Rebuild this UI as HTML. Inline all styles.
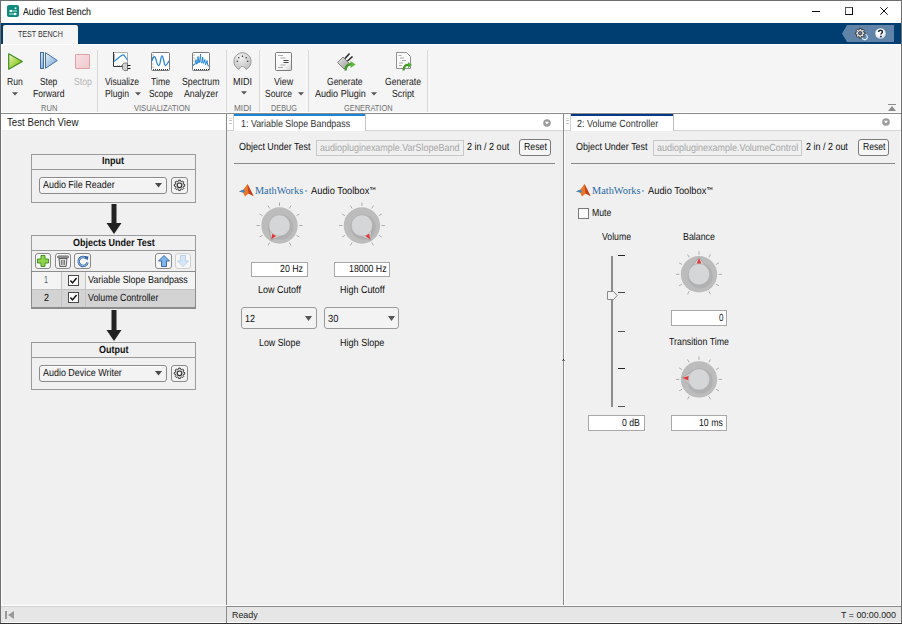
<!DOCTYPE html><html><head><meta charset="utf-8"><style>
html,body{margin:0;padding:0;}body{width:902px;height:624px;overflow:hidden;position:relative;background:#f0f0f0;font-family:"Liberation Sans",sans-serif;}
div{position:absolute;box-sizing:border-box;} .t{white-space:pre;} svg{position:absolute;overflow:visible;}
</style></head><body>
<div style="left:0px;top:0px;width:902px;height:23px;background:#fff;"></div>
<svg style="left:7px;top:5px" width="12" height="12" viewBox="0 0 12 12"><rect x="0" y="0" width="12" height="12" rx="2" fill="#0f8a80"/><path d="M2 6h8M2 9h8" stroke="#bfe8e2" stroke-width="1"/><circle cx="4" cy="6" r="1.2" fill="#fff"/><circle cx="8" cy="9" r="1.2" fill="#fff"/><circle cx="8.5" cy="3.2" r="1" fill="#e0f4f1"/></svg>
<div class="t" style="left:22.50px;top:8px;font-size:10.3px;line-height:10.3px;transform:scaleX(0.8500);transform-origin:0 0;color:#000;text-rendering:geometricPrecision;">Audio Test Bench</div>
<div style="left:812px;top:11px;width:8px;height:1px;background:#111;"></div>
<div style="left:845px;top:7px;width:8px;height:8px;border:1px solid #111;border-top-color:#555;border-left-color:#555;"></div>
<svg style="left:880px;top:7px" width="8" height="8" viewBox="0 0 8 8"><path d="M0.3 0.3L7.7 7.7M7.7 0.3L0.3 7.7" stroke="#111" stroke-width="1"/></svg>
<div style="left:0px;top:23px;width:902px;height:21px;background:#003e72;"></div>
<div style="left:3px;top:25px;width:75px;height:19px;background:#f5f5f5;border-radius:2px 2px 0 0;"></div>
<div class="t" style="left:18.30px;top:30px;font-size:8.5px;line-height:8.5px;transform:scaleX(0.8336);transform-origin:0 0;color:#333;">TEST BENCH</div>
<svg style="left:842px;top:25px" width="52" height="17" viewBox="0 0 52 17"><path d="M5 0H52V17H5L0 8.5Z" fill="#5f84a8"/></svg>
<svg style="left:855px;top:28px" width="13" height="12" viewBox="0 0 13 12"><path d="M4.21 1.63L4.36 0.37L6.04 0.37L6.19 1.63L7.02 1.98L8.02 1.19L9.21 2.38L8.42 3.38L8.77 4.21L10.03 4.36L10.03 6.04L8.77 6.19L8.42 7.02L9.21 8.02L8.02 9.21L7.02 8.42L6.19 8.77L6.04 10.03L4.36 10.03L4.21 8.77L3.38 8.42L2.38 9.21L1.19 8.02L1.98 7.02L1.63 6.19L0.37 6.04L0.37 4.36L1.63 4.21L1.98 3.38L1.19 2.38L2.38 1.19L3.38 1.98Z" fill="#e4e4e4" stroke="#3a3a3a" stroke-width="1"/><circle cx="5.2" cy="5.2" r="1.7" fill="#5f84a8" stroke="#333" stroke-width="0.9"/><path d="M7.2 9.6A2.6 2.6 0 1 0 10.6 6.6" stroke="#dff0ff" stroke-width="1.1" fill="none"/></svg>
<svg style="left:875px;top:28px" width="11" height="11" viewBox="0 0 11 11"><defs><radialGradient id="gH" cx="0.45" cy="0.35" r="0.7"><stop offset="0.5" stop-color="#ffffff"/><stop offset="1" stop-color="#b9c6d2"/></radialGradient></defs><circle cx="5.5" cy="5.5" r="5.3" fill="url(#gH)"/><path d="M3.6 4.1C3.6 2.9 4.4 2.3 5.5 2.3S7.4 2.9 7.4 4C7.4 5.2 5.9 5.3 5.9 6.6" stroke="#1d2a3a" stroke-width="1.5" fill="none"/><circle cx="5.9" cy="8.5" r="0.9" fill="#1d2a3a"/></svg>
<div style="left:0px;top:44px;width:902px;height:69px;background:#f5f5f5;"></div>
<div style="left:1px;top:112px;width:900px;height:1px;background:#fff;"></div>
<div style="left:1px;top:44px;width:900px;height:1px;background:#fff;"></div>
<div style="left:1px;top:44px;width:1px;height:69px;background:#fff;"></div>
<div style="left:900px;top:44px;width:1px;height:69px;background:#fff;"></div>
<div style="left:0px;top:113px;width:902px;height:1px;background:#8c8c8c;"></div>
<div style="left:97px;top:50px;width:1px;height:62px;background:#d9d9d9;"></div>
<div style="left:226px;top:50px;width:1px;height:62px;background:#d9d9d9;"></div>
<div style="left:259px;top:50px;width:1px;height:62px;background:#d9d9d9;"></div>
<div style="left:308px;top:50px;width:1px;height:62px;background:#d9d9d9;"></div>
<div style="left:427px;top:50px;width:1px;height:62px;background:#d9d9d9;"></div>
<svg style="left:8px;top:53px" width="15" height="17" viewBox="0 0 15 17"><defs><linearGradient id="gG" x1="0" y1="0" x2="1" y2="1"><stop offset="0" stop-color="#f0f9c8"/><stop offset="0.6" stop-color="#9fd13a"/><stop offset="1" stop-color="#6ab020"/></linearGradient></defs><path d="M0.7 0.8L14.3 8.5L0.7 16.2Z" fill="url(#gG)" stroke="#3e8a22" stroke-width="1.2" stroke-linejoin="round"/></svg>
<svg style="left:40px;top:52px" width="18" height="17" viewBox="0 0 18 17"><defs><linearGradient id="gB" x1="0" y1="0" x2="1" y2="1"><stop offset="0" stop-color="#e8f4fd"/><stop offset="1" stop-color="#6a9fd4"/></linearGradient></defs><rect x="0.5" y="0.5" width="3" height="16" fill="url(#gB)" stroke="#466f9a" stroke-width="1"/><path d="M5.5 0.7L17.3 8.5L5.5 16.3Z" fill="url(#gB)" stroke="#466f9a" stroke-width="1" stroke-linejoin="round"/></svg>
<div style="left:75px;top:54px;width:15px;height:15px;background:linear-gradient(135deg,#f8e0e2,#efc8cc);border:1px solid #dba3a8;border-radius:1px;"></div>
<div class="t" style="left:6.70px;top:78px;font-size:10.3px;line-height:10.3px;transform:scaleX(0.8318);transform-origin:0 0;color:#1a1a1a;text-rendering:geometricPrecision;">Run</div>
<svg style="left:12px;top:91.6px" width="6" height="4" viewBox="0 0 6 4"><path d="M0 0.3H6L3 3.6Z" fill="#555"/></svg>
<div class="t" style="left:39.70px;top:78px;font-size:10.3px;line-height:10.3px;transform:scaleX(0.8141);transform-origin:0 0;color:#1a1a1a;text-rendering:geometricPrecision;">Step</div>
<div class="t" style="left:32.70px;top:90px;font-size:10.3px;line-height:10.3px;transform:scaleX(0.8318);transform-origin:0 0;color:#1a1a1a;text-rendering:geometricPrecision;">Forward</div>
<div class="t" style="left:73.70px;top:78px;font-size:10.3px;line-height:10.3px;transform:scaleX(0.8471);transform-origin:0 0;color:#b4b4b4;text-rendering:geometricPrecision;">Stop</div>
<div class="t" style="left:41.00px;top:104px;font-size:8.5px;line-height:8.5px;transform:scaleX(0.8871);transform-origin:0 0;color:#6e6e6e;">RUN</div>
<svg style="left:113px;top:52px" width="19" height="19" viewBox="0 0 19 19"><rect x="0" y="0" width="15" height="15" fill="#fff"/><path d="M0.5 0.5H14.5V15" stroke="#b0b0b0" stroke-width="1" fill="none"/><path d="M0.5 0V14.5H15" stroke="#333" stroke-width="1" fill="none"/><path d="M1 3h1M1 5h1M1 7h1M4 14h1M6 14h1M8 14h1" stroke="#444" stroke-width="0.8"/><path d="M1 9.5L6.5 5L9 3.2H11L14.5 8" stroke="#2b8ad6" stroke-width="1.2" fill="none"/><path d="M9.5 12.5L11 11H14.5V18.5H11L9.5 17Z" fill="#d0d0d0" stroke="#666" stroke-width="0.8"/><path d="M14.5 13.5h3M14.5 16.5h3" stroke="#111" stroke-width="1.2"/></svg>
<svg style="left:151px;top:52px" width="19" height="19" viewBox="0 0 19 19"><rect x="0.5" y="0.5" width="18" height="18" rx="1" fill="#fff" stroke="#7a7a7a" stroke-width="1"/><path d="M1 9C2 4.5 3.5 3.5 4.5 6S6 13.5 7.8 13.5S9.5 4 11 4S13 13.5 14.5 13.5S17 10 18 9" stroke="#2b8ad6" stroke-width="1.3" fill="none"/><path d="M2 17.5h16" stroke="#333" stroke-width="1" stroke-dasharray="1 1"/><path d="M1.5 3h1M1.5 6h1M1.5 12h1M1.5 15h1" stroke="#555" stroke-width="0.8"/></svg>
<svg style="left:192px;top:52px" width="18" height="19" viewBox="0 0 18 19"><rect x="0.5" y="0.5" width="17" height="18" rx="1" fill="#fff" stroke="#7a7a7a" stroke-width="1"/><path d="M1 14L2 12L3 12.5L4 7.5L4.5 12L5.5 11.5L6 4.5L6.8 11L7.5 10L8.5 2L9 10.5L10 11L10.7 5L11.3 11.5L12 10.5L12.8 7.5L13.5 13L14.3 11L15 8.5L15.8 13.5L17 14" stroke="#2b8ad6" stroke-width="1" fill="none" stroke-linejoin="round"/><path d="M2 17.5h15" stroke="#333" stroke-width="1" stroke-dasharray="1 1"/><path d="M1.5 3h1M1.5 6h1M1.5 9h1" stroke="#555" stroke-width="0.8"/></svg>
<div class="t" style="left:104.70px;top:78px;font-size:10.3px;line-height:10.3px;transform:scaleX(0.8293);transform-origin:0 0;color:#1a1a1a;text-rendering:geometricPrecision;">Visualize</div>
<div class="t" style="left:105.00px;top:90px;font-size:10.3px;line-height:10.3px;transform:scaleX(0.8384);transform-origin:0 0;color:#1a1a1a;text-rendering:geometricPrecision;">Plugin</div>
<svg style="left:134.5px;top:91.6px" width="6" height="4" viewBox="0 0 6 4"><path d="M0 0.3H6L3 3.6Z" fill="#555"/></svg>
<div class="t" style="left:151.00px;top:78px;font-size:10.3px;line-height:10.3px;transform:scaleX(0.8444);transform-origin:0 0;color:#1a1a1a;text-rendering:geometricPrecision;">Time</div>
<div class="t" style="left:148.60px;top:90px;font-size:10.3px;line-height:10.3px;transform:scaleX(0.8171);transform-origin:0 0;color:#1a1a1a;text-rendering:geometricPrecision;">Scope</div>
<div class="t" style="left:181.80px;top:78px;font-size:10.3px;line-height:10.3px;transform:scaleX(0.8499);transform-origin:0 0;color:#1a1a1a;text-rendering:geometricPrecision;">Spectrum</div>
<div class="t" style="left:183.60px;top:90px;font-size:10.3px;line-height:10.3px;transform:scaleX(0.8523);transform-origin:0 0;color:#1a1a1a;text-rendering:geometricPrecision;">Analyzer</div>
<div class="t" style="left:134.00px;top:104px;font-size:8.5px;line-height:8.5px;transform:scaleX(0.8871);transform-origin:0 0;color:#6e6e6e;">VISUALIZATION</div>
<svg style="left:233px;top:52px" width="19" height="18" viewBox="0 0 19 18"><defs><radialGradient id="gM" cx="0.4" cy="0.3" r="0.8"><stop offset="0" stop-color="#f2f2f2"/><stop offset="1" stop-color="#bdbdbd"/></radialGradient></defs><path d="M9.5 0.6A8.8 8.8 0 0 1 13 17.4C12 15.5 11 14.5 9.5 14.5S7 15.5 6 17.4A8.8 8.8 0 0 1 9.5 0.6Z" fill="url(#gM)" stroke="#8a8a8a" stroke-width="0.8"/><circle cx="9.5" cy="4.2" r="0.75" fill="#333"/><circle cx="5.8" cy="5.8" r="0.75" fill="#333"/><circle cx="13.2" cy="5.8" r="0.75" fill="#333"/><circle cx="4.3" cy="9.2" r="0.75" fill="#333"/><circle cx="14.7" cy="9.2" r="0.75" fill="#333"/></svg>
<div class="t" style="left:232.90px;top:78px;font-size:10.3px;line-height:10.3px;transform:scaleX(0.8782);transform-origin:0 0;color:#1a1a1a;text-rendering:geometricPrecision;">MIDI</div>
<svg style="left:240.5px;top:91.3px" width="6" height="4" viewBox="0 0 6 4"><path d="M0 0.3H6L3 3.6Z" fill="#555"/></svg>
<div class="t" style="left:233.80px;top:104px;font-size:8.5px;line-height:8.5px;transform:scaleX(0.9667);transform-origin:0 0;color:#6e6e6e;">MIDI</div>
<svg style="left:275px;top:52px" width="17" height="19" viewBox="0 0 17 19"><defs><linearGradient id="gD" x1="0" y1="0" x2="1" y2="1"><stop offset="0" stop-color="#fff"/><stop offset="0.7" stop-color="#f4f4f4"/><stop offset="1" stop-color="#cfcfcf"/></linearGradient></defs><rect x="0.5" y="0.5" width="16" height="18" rx="1" fill="url(#gD)" stroke="#7a7a7a" stroke-width="1"/><path d="M3 3.5h5M5.5 6h5M5.5 13h5M3 15.5h5" stroke="#999" stroke-width="0.8"/><path d="M8.5 8.5h5M8.5 10.5h5" stroke="#444" stroke-width="1"/></svg>
<div class="t" style="left:273.80px;top:78px;font-size:10.3px;line-height:10.3px;transform:scaleX(0.8629);transform-origin:0 0;color:#1a1a1a;text-rendering:geometricPrecision;">View</div>
<div class="t" style="left:265.20px;top:90px;font-size:10.3px;line-height:10.3px;transform:scaleX(0.8307);transform-origin:0 0;color:#1a1a1a;text-rendering:geometricPrecision;">Source</div>
<svg style="left:297.5px;top:91.5px" width="6" height="4" viewBox="0 0 6 4"><path d="M0 0.3H6L3 3.6Z" fill="#555"/></svg>
<div class="t" style="left:271.00px;top:104px;font-size:8.5px;line-height:8.5px;transform:scaleX(0.8595);transform-origin:0 0;color:#6e6e6e;">DEBUG</div>
<svg style="left:337px;top:52px" width="19" height="19" viewBox="0 0 19 19"><defs><linearGradient id="gP" x1="0" y1="0" x2="1" y2="1"><stop offset="0" stop-color="#e6e6e6"/><stop offset="1" stop-color="#9a9a9a"/></linearGradient></defs><path d="M0.5 10.5L6 5L12.5 11.5L7 17Z" fill="url(#gP)" stroke="#6a6a6a" stroke-width="0.8"/><path d="M8 6.5L12.5 1.5M10.5 9L15.5 4.5" stroke="#2a2a2a" stroke-width="1.6"/><path d="M8.5 18.5C8.5 14 11 12 14.5 12.3" stroke="#3f9a2a" stroke-width="2.4" fill="none"/><path d="M13.5 9L18.5 12.5L13.5 16Z" fill="#5bb83a"/></svg>
<svg style="left:396px;top:52px" width="16" height="19" viewBox="0 0 16 19"><path d="M0.5 0.5H10.5L14.5 4.5V16.5H0.5Z" fill="#fafafa" stroke="#777" stroke-width="0.8"/><path d="M2.5 3.5h3M4 6h4M6 8.5h4M3 11h4M3 13.5h3" stroke="#999" stroke-width="0.8"/><path d="M7.5 18.5C7.5 14 10 12.5 13 13" stroke="#3f9a2a" stroke-width="2.2" fill="none"/><path d="M12 10L16 13L12 16Z" fill="#4fae32"/></svg>
<div class="t" style="left:327.30px;top:78px;font-size:10.3px;line-height:10.3px;transform:scaleX(0.8279);transform-origin:0 0;color:#1a1a1a;text-rendering:geometricPrecision;">Generate</div>
<div class="t" style="left:315.40px;top:90px;font-size:10.3px;line-height:10.3px;transform:scaleX(0.8778);transform-origin:0 0;color:#1a1a1a;text-rendering:geometricPrecision;">Audio Plugin</div>
<svg style="left:371px;top:91.5px" width="6" height="4" viewBox="0 0 6 4"><path d="M0 0.3H6L3 3.6Z" fill="#555"/></svg>
<div class="t" style="left:385.00px;top:78px;font-size:10.3px;line-height:10.3px;transform:scaleX(0.8372);transform-origin:0 0;color:#1a1a1a;text-rendering:geometricPrecision;">Generate</div>
<div class="t" style="left:391.50px;top:90px;font-size:10.3px;line-height:10.3px;transform:scaleX(0.8455);transform-origin:0 0;color:#1a1a1a;text-rendering:geometricPrecision;">Script</div>
<div class="t" style="left:343.60px;top:104px;font-size:8.5px;line-height:8.5px;transform:scaleX(0.8737);transform-origin:0 0;color:#6e6e6e;">GENERATION</div>
<div style="left:888px;top:104px;width:8px;height:1px;background:#8c8c8c;"></div>
<svg style="left:888px;top:106px" width="8" height="5" viewBox="0 0 8 5"><path d="M0 5H8L4 0Z" fill="#8c8c8c"/></svg>
<div style="left:1px;top:114px;width:225px;height:16px;background:#fff;"></div>
<div class="t" style="left:7.10px;top:117px;font-size:11px;line-height:11px;transform:scaleX(0.8801);transform-origin:0 0;color:#222;">Test Bench View</div>
<div style="left:1px;top:130px;width:225px;height:475px;background:#f0f0f0;"></div>
<div style="left:1px;top:130px;width:1px;height:475px;background:#fff;"></div>
<div style="left:226px;top:114px;width:1px;height:509px;background:#8a8a8a;"></div>
<div style="left:227px;top:114px;width:336px;height:17px;background:#fff;"></div>
<div style="left:365px;top:130px;width:198px;height:1px;background:#d6d6d6;"></div>
<div style="left:234px;top:114px;width:131px;height:2px;background:#1b84d6;"></div>
<div style="left:365px;top:114px;width:1px;height:17px;background:#c4c4c4;"></div>
<div style="left:563px;top:114px;width:1px;height:492px;background:#8a8a8a;"></div>
<div style="left:564px;top:114px;width:1px;height:492px;background:#fff;"></div>
<div style="left:563px;top:359px;width:1px;height:2px;background:#222;"></div>
<div style="left:562px;top:360px;width:3px;height:1px;background:#777;"></div>
<div style="left:565px;top:114px;width:336px;height:17px;background:#fff;"></div>
<div style="left:673px;top:130px;width:228px;height:1px;background:#d6d6d6;"></div>
<div style="left:571px;top:114px;width:102px;height:2px;background:#00398a;"></div>
<div style="left:673px;top:114px;width:1px;height:17px;background:#bdbdbd;"></div>
<div style="left:227px;top:114px;width:7px;height:17px;background:#fff;border-right:1px solid #d2d2d2;border-bottom:1px solid #d2d2d2;"></div>
<div style="left:229px;top:118px;width:3px;height:1px;background:#dedede;"></div>
<div style="left:229px;top:120px;width:3px;height:1px;background:#c4c4c4;"></div>
<div style="left:229px;top:123px;width:3px;height:1px;background:#c4c4c4;"></div>
<div style="left:564px;top:114px;width:7px;height:17px;background:#fff;border-right:1px solid #d2d2d2;border-bottom:1px solid #d2d2d2;"></div>
<div style="left:566px;top:118px;width:3px;height:1px;background:#dedede;"></div>
<div style="left:566px;top:120px;width:3px;height:1px;background:#c4c4c4;"></div>
<div style="left:566px;top:123px;width:3px;height:1px;background:#c4c4c4;"></div>
<div class="t" style="left:241.10px;top:120px;font-size:10.3px;line-height:10.3px;transform:scaleX(0.8641);transform-origin:0 0;color:#333;text-rendering:geometricPrecision;">1: Variable Slope Bandpass</div>
<div class="t" style="left:577.30px;top:120px;font-size:10.3px;line-height:10.3px;transform:scaleX(0.8697);transform-origin:0 0;color:#333;text-rendering:geometricPrecision;">2: Volume Controller</div>
<svg style="left:543px;top:118.5px" width="8" height="8" viewBox="0 0 8 8"><circle cx="4" cy="4" r="3.8" fill="#9b9b9b"/><path d="M2 2.8H6L4 5.5Z" fill="#fff"/></svg>
<svg style="left:881.5px;top:118px" width="8" height="8" viewBox="0 0 8 8"><circle cx="4" cy="4" r="3.8" fill="#9b9b9b"/><path d="M2 2.8H6L4 5.5Z" fill="#fff"/></svg>
<div style="left:31px;top:154px;width:165px;height:49px;border:1px solid #9a9a9a;background:#f0f0f0;"></div>
<div style="left:31px;top:169px;width:165px;height:1px;background:#9a9a9a;"></div>
<div class="t" style="left:102.40px;top:157px;font-size:10.3px;line-height:10.3px;transform:scaleX(0.8756);transform-origin:0 0;color:#111;font-weight:bold;text-rendering:geometricPrecision;">Input</div>
<div style="left:39px;top:177px;width:128px;height:17px;border:1px solid #8a8a8a;border-radius:3px;background:#f3f3f3;box-shadow:inset 0 1px 0 #fff;"></div>
<div class="t" style="left:43.10px;top:181px;font-size:10.3px;line-height:10.3px;transform:scaleX(0.8691);transform-origin:0 0;color:#111;text-rendering:geometricPrecision;">Audio File Reader</div>
<svg style="left:155px;top:183px" width="7" height="5" viewBox="0 0 7 5"><path d="M0 0H7L3.5 4.5Z" fill="#4a4a4a"/></svg>
<div style="left:171px;top:177px;width:17px;height:17px;border:1px solid #8a8a8a;border-radius:3px;background:#f3f3f3;"></div>
<svg style="left:173px;top:179px" width="13" height="13" viewBox="0 0 13 13"><path d="M5.46 2.13L5.67 1.07L7.33 1.07L7.54 2.13L8.71 2.61L9.62 2.01L10.79 3.18L10.19 4.09L10.67 5.26L11.73 5.47L11.73 7.13L10.67 7.34L10.19 8.51L10.79 9.42L9.62 10.59L8.71 9.99L7.54 10.47L7.33 11.53L5.67 11.53L5.46 10.47L4.29 9.99L3.38 10.59L2.21 9.42L2.81 8.51L2.33 7.34L1.27 7.13L1.27 5.47L2.33 5.26L2.81 4.09L2.21 3.18L3.38 2.01L4.29 2.61Z" fill="#d8d8d8" stroke="#3a3a3a" stroke-width="1" stroke-linejoin="round"/><circle cx="6.5" cy="6.3" r="2.3" fill="#f4f4f4" stroke="#333" stroke-width="1.1"/></svg>
<svg style="left:105.5px;top:204px" width="16" height="30" viewBox="0 0 16 30"><rect x="5.5" y="0" width="5" height="20" fill="#222"/><path d="M0.5 19H15.5L8 30Z" fill="#222"/></svg>
<div style="left:31px;top:235px;width:165px;height:74px;border:1px solid #9a9a9a;background:#f0f0f0;"></div>
<div style="left:31px;top:250px;width:165px;height:1px;background:#9a9a9a;"></div>
<div class="t" style="left:72.50px;top:239px;font-size:10.3px;line-height:10.3px;transform:scaleX(0.8737);transform-origin:0 0;color:#111;font-weight:bold;text-rendering:geometricPrecision;">Objects Under Test</div>
<div style="left:35px;top:253px;width:16px;height:16px;border:1px solid #8a8a8a;border-radius:3px;background:#f6f6f6;"></div>
<div style="left:55px;top:253px;width:16px;height:16px;border:1px solid #8a8a8a;border-radius:3px;background:#f6f6f6;"></div>
<div style="left:74px;top:253px;width:17px;height:16px;border:1px solid #8a8a8a;border-radius:3px;background:#f6f6f6;"></div>
<div style="left:155px;top:253px;width:17px;height:16px;border:1px solid #8a8a8a;border-radius:3px;background:#f6f6f6;"></div>
<div style="left:175px;top:253px;width:16px;height:16px;border:1px solid #cfcfcf;border-radius:3px;background:#f6f6f6;"></div>
<svg style="left:37px;top:255px" width="12" height="12" viewBox="0 0 12 12"><path d="M4 0.5H8V4H11.5V8H8V11.5H4V8H0.5V4H4Z" fill="#8fd34a" stroke="#3d8a1e" stroke-width="0.9"/></svg>
<svg style="left:57px;top:255px" width="12" height="12" viewBox="0 0 12 12"><rect x="0.5" y="1" width="11" height="2" rx="1" fill="#bbb" stroke="#444" stroke-width="0.8"/><path d="M2 3.5H10L9.2 11.5H2.8Z" fill="#ddd" stroke="#444" stroke-width="0.8"/><path d="M4.5 5V10M6 5V10M7.5 5V10" stroke="#555" stroke-width="0.7"/></svg>
<svg style="left:77px;top:255px" width="12" height="12" viewBox="0 0 12 12"><path d="M9.5 3.5A4.5 4.5 0 1 0 10.5 7.5" stroke="#2f5f9e" stroke-width="2.4" fill="none"/><path d="M9.5 3.5A4.5 4.5 0 1 0 10.5 7.5" stroke="#9cc7ef" stroke-width="1" fill="none"/><path d="M7 1L11.5 1.5L10.5 5.5Z" fill="#2f5f9e"/></svg>
<svg style="left:157.5px;top:255px" width="12" height="12" viewBox="0 0 12 12"><path d="M6 0.5L11.5 6H8.5V11.5H3.5V6H0.5Z" fill="#7fb6ea" stroke="#2f5f9e" stroke-width="0.9"/></svg>
<svg style="left:177px;top:255px" width="12" height="12" viewBox="0 0 12 12"><path d="M6 11.5L11.5 6H8.5V0.5H3.5V6H0.5Z" fill="#d6e6f5" stroke="#b7cde3" stroke-width="0.9"/></svg>
<div style="left:31px;top:271px;width:165px;height:38px;background:#8c8c8c;"></div>
<div style="left:32px;top:272px;width:30px;height:17px;background:#f4f4f4;"></div>
<div style="left:62px;top:272px;width:24px;height:17px;background:#ececec;"></div>
<div style="left:86px;top:272px;width:109px;height:17px;background:#f4f4f4;"></div>
<div style="left:32px;top:289px;width:163px;height:18px;background:#d3d3d3;"></div>
<div style="left:32px;top:289px;width:163px;height:1px;background:#c2c2c2;"></div>
<div style="left:61px;top:272px;width:1px;height:35px;background:#c4c4c4;"></div>
<div style="left:85px;top:272px;width:1px;height:35px;background:#c4c4c4;"></div>
<div class="t" style="left:44.00px;top:276px;font-size:10.3px;line-height:10.3px;transform:scaleX(0.6957);transform-origin:0 0;color:#5a5a5a;text-rendering:geometricPrecision;">1</div>
<div class="t" style="left:43.50px;top:294px;font-size:10.3px;line-height:10.3px;transform:scaleX(0.8696);transform-origin:0 0;color:#111;text-rendering:geometricPrecision;">2</div>
<div style="left:68px;top:275px;width:11px;height:11px;border:1px solid #4a4a4a;background:#fff;"></div>
<svg style="left:70px;top:277px" width="7" height="7" viewBox="0 0 7 7"><path d="M0.4 3.4L2.5 5.9L6.6 0.9" stroke="#111" stroke-width="1.5" fill="none"/></svg>
<div style="left:68px;top:292px;width:11px;height:11px;border:1px solid #4a4a4a;background:#fff;"></div>
<svg style="left:70px;top:294px" width="7" height="7" viewBox="0 0 7 7"><path d="M0.4 3.4L2.5 5.9L6.6 0.9" stroke="#111" stroke-width="1.5" fill="none"/></svg>
<div class="t" style="left:88.00px;top:276px;font-size:10.3px;line-height:10.3px;transform:scaleX(0.8688);transform-origin:0 0;color:#111;text-rendering:geometricPrecision;">Variable Slope Bandpass</div>
<div class="t" style="left:88.00px;top:294px;font-size:10.3px;line-height:10.3px;transform:scaleX(0.8611);transform-origin:0 0;color:#111;text-rendering:geometricPrecision;">Volume Controller</div>
<svg style="left:105.5px;top:310px" width="16" height="31" viewBox="0 0 16 31"><rect x="5.5" y="0" width="5" height="21" fill="#222"/><path d="M0.5 20H15.5L8 31Z" fill="#222"/></svg>
<div style="left:31px;top:342px;width:165px;height:48px;border:1px solid #9a9a9a;background:#f0f0f0;"></div>
<div style="left:31px;top:357px;width:165px;height:1px;background:#9a9a9a;"></div>
<div class="t" style="left:99.00px;top:346px;font-size:10.3px;line-height:10.3px;transform:scaleX(0.8711);transform-origin:0 0;color:#111;font-weight:bold;text-rendering:geometricPrecision;">Output</div>
<div style="left:39px;top:365px;width:128px;height:17px;border:1px solid #8a8a8a;border-radius:3px;background:#f3f3f3;box-shadow:inset 0 1px 0 #fff;"></div>
<div class="t" style="left:43.10px;top:369px;font-size:10.3px;line-height:10.3px;transform:scaleX(0.8682);transform-origin:0 0;color:#111;text-rendering:geometricPrecision;">Audio Device Writer</div>
<svg style="left:155px;top:371px" width="7" height="5" viewBox="0 0 7 5"><path d="M0 0H7L3.5 4.5Z" fill="#4a4a4a"/></svg>
<div style="left:171px;top:365px;width:17px;height:17px;border:1px solid #8a8a8a;border-radius:3px;background:#f3f3f3;"></div>
<svg style="left:173px;top:367px" width="13" height="13" viewBox="0 0 13 13"><path d="M5.46 2.13L5.67 1.07L7.33 1.07L7.54 2.13L8.71 2.61L9.62 2.01L10.79 3.18L10.19 4.09L10.67 5.26L11.73 5.47L11.73 7.13L10.67 7.34L10.19 8.51L10.79 9.42L9.62 10.59L8.71 9.99L7.54 10.47L7.33 11.53L5.67 11.53L5.46 10.47L4.29 9.99L3.38 10.59L2.21 9.42L2.81 8.51L2.33 7.34L1.27 7.13L1.27 5.47L2.33 5.26L2.81 4.09L2.21 3.18L3.38 2.01L4.29 2.61Z" fill="#d8d8d8" stroke="#3a3a3a" stroke-width="1" stroke-linejoin="round"/><circle cx="6.5" cy="6.3" r="2.3" fill="#f4f4f4" stroke="#333" stroke-width="1.1"/></svg>
<div class="t" style="left:238.90px;top:143px;font-size:10.3px;line-height:10.3px;transform:scaleX(0.8693);transform-origin:0 0;color:#111;text-rendering:geometricPrecision;">Object Under Test</div>
<div style="left:316px;top:140px;width:148px;height:16px;border:1px solid #c8c8c8;background:#f0f0f0;"></div>
<div class="t" style="left:319.80px;top:144px;font-size:10.3px;line-height:10.3px;transform:scaleX(0.8712);transform-origin:0 0;color:#a6a6a6;text-rendering:geometricPrecision;">audiopluginexample.VarSlopeBand</div>
<div class="t" style="left:467.40px;top:143px;font-size:10.3px;line-height:10.3px;transform:scaleX(0.8769);transform-origin:0 0;color:#111;text-rendering:geometricPrecision;">2 in / 2 out</div>
<div style="left:519px;top:139px;width:32px;height:17px;border:1px solid #7a7a7a;border-radius:3px;background:#f6f6f6;"></div>
<div class="t" style="left:523.90px;top:143px;font-size:10.3px;line-height:10.3px;transform:scaleX(0.8521);transform-origin:0 0;color:#111;text-rendering:geometricPrecision;">Reset</div>
<div style="left:234px;top:163px;width:321px;height:1px;background:#8a8a8a;"></div>
<div class="t" style="left:576.00px;top:143px;font-size:10.3px;line-height:10.3px;transform:scaleX(0.8705);transform-origin:0 0;color:#111;text-rendering:geometricPrecision;">Object Under Test</div>
<div style="left:653px;top:140px;width:149px;height:16px;border:1px solid #c8c8c8;background:#f0f0f0;"></div>
<div class="t" style="left:656.50px;top:144px;font-size:10.3px;line-height:10.3px;transform:scaleX(0.8722);transform-origin:0 0;color:#a6a6a6;text-rendering:geometricPrecision;">audiopluginexample.VolumeControl</div>
<div class="t" style="left:806.30px;top:143px;font-size:10.3px;line-height:10.3px;transform:scaleX(0.8706);transform-origin:0 0;color:#111;text-rendering:geometricPrecision;">2 in / 2 out</div>
<div style="left:858px;top:139px;width:31px;height:17px;border:1px solid #7a7a7a;border-radius:3px;background:#f6f6f6;"></div>
<div class="t" style="left:862.50px;top:143px;font-size:10.3px;line-height:10.3px;transform:scaleX(0.8372);transform-origin:0 0;color:#111;text-rendering:geometricPrecision;">Reset</div>
<div style="left:571px;top:163px;width:324px;height:1px;background:#8a8a8a;"></div>
<svg style="left:239px;top:184px" width="15" height="13" viewBox="0 0 15 13"><path d="M0 7.5L4.5 5.5L8.5 0L12 7L14.5 12L9.5 9.5L6 12.5L4 8.5Z" fill="#e8762b"/><path d="M0 7.5L4.5 5.5L6 8L4 8.5Z" fill="#3b87c8"/><path d="M8.5 0L12 7L14.5 12L9.5 9.5Z" fill="#c3401c"/></svg>
<div class="t" style="left:255.40px;top:185px;font-size:11px;line-height:11px;transform:scaleX(0.9317);transform-origin:0 0;color:#2b6aa6;font-family:Liberation Serif,serif;">MathWorks</div>
<div style="left:305.0px;top:190px;width:1.5px;height:1.5px;background:#7aa6cf;border-radius:1px;"></div>
<div class="t" style="left:310.70px;top:187px;font-size:10.3px;line-height:10.3px;transform:scaleX(0.9039);transform-origin:0 0;color:#111;text-rendering:geometricPrecision;">Audio Toolbox</div>
<svg style="left:369.5px;top:186.8px" width="6" height="3" viewBox="0 0 6 3"><path d="M0 0.5H2.4M1.2 0.5V3M3 3V0.5L4 2L5 0.5V3" stroke="#333" stroke-width="0.7" fill="none"/></svg>
<svg style="left:576px;top:184px" width="15" height="13" viewBox="0 0 15 13"><path d="M0 7.5L4.5 5.5L8.5 0L12 7L14.5 12L9.5 9.5L6 12.5L4 8.5Z" fill="#e8762b"/><path d="M0 7.5L4.5 5.5L6 8L4 8.5Z" fill="#3b87c8"/><path d="M8.5 0L12 7L14.5 12L9.5 9.5Z" fill="#c3401c"/></svg>
<div class="t" style="left:592.20px;top:185px;font-size:11px;line-height:11px;transform:scaleX(0.9395);transform-origin:0 0;color:#2b6aa6;font-family:Liberation Serif,serif;">MathWorks</div>
<div style="left:642.2px;top:190px;width:1.5px;height:1.5px;background:#7aa6cf;border-radius:1px;"></div>
<div class="t" style="left:647.60px;top:187px;font-size:10.3px;line-height:10.3px;transform:scaleX(0.9054);transform-origin:0 0;color:#111;text-rendering:geometricPrecision;">Audio Toolbox</div>
<svg style="left:706.5px;top:186.8px" width="6" height="3" viewBox="0 0 6 3"><path d="M0 0.5H2.4M1.2 0.5V3M3 3V0.5L4 2L5 0.5V3" stroke="#333" stroke-width="0.7" fill="none"/></svg>
<svg style="left:254px;top:200px" width="50" height="50" viewBox="0 0 50 50"><g transform="translate(25.5,25.5)"><line x1="-9.80" y1="16.97" x2="-11.50" y2="19.92" stroke="#a6a6a6" stroke-width="0.9"/><line x1="-16.97" y1="9.80" x2="-19.92" y2="11.50" stroke="#a6a6a6" stroke-width="0.9"/><line x1="-19.60" y1="-0.00" x2="-23.00" y2="-0.00" stroke="#a6a6a6" stroke-width="0.9"/><line x1="-16.97" y1="-9.80" x2="-19.92" y2="-11.50" stroke="#a6a6a6" stroke-width="0.9"/><line x1="-9.80" y1="-16.97" x2="-11.50" y2="-19.92" stroke="#a6a6a6" stroke-width="0.9"/><line x1="0.00" y1="-19.60" x2="0.00" y2="-23.00" stroke="#a6a6a6" stroke-width="0.9"/><line x1="9.80" y1="-16.97" x2="11.50" y2="-19.92" stroke="#a6a6a6" stroke-width="0.9"/><line x1="16.97" y1="-9.80" x2="19.92" y2="-11.50" stroke="#a6a6a6" stroke-width="0.9"/><line x1="19.60" y1="-0.00" x2="23.00" y2="-0.00" stroke="#a6a6a6" stroke-width="0.9"/><line x1="16.97" y1="9.80" x2="19.92" y2="11.50" stroke="#a6a6a6" stroke-width="0.9"/><line x1="9.80" y1="16.97" x2="11.50" y2="19.92" stroke="#a6a6a6" stroke-width="0.9"/><circle cx="0" cy="0" r="18.2" fill="#bcbcbc"/><circle cx="1.2" cy="1.6" r="12.6" fill="#b1b1b1"/><path d="M-10.55 1.78L-8.40 14.55L3.74 10.03Z" fill="#d0d1d2" stroke="#9c9c9c" stroke-width="0.7" stroke-linejoin="round"/><circle cx="0" cy="0" r="10.7" fill="#d5d6d8" stroke="#a9a9a9" stroke-width="0.6"/><path d="M-7.36 8.17L-8.25 14.03L-3.40 10.46Z" fill="#e2383c"/></g></svg>
<svg style="left:336px;top:200px" width="50" height="50" viewBox="0 0 50 50"><g transform="translate(25.899999999999977,25.5)"><line x1="-9.80" y1="16.97" x2="-11.50" y2="19.92" stroke="#a6a6a6" stroke-width="0.9"/><line x1="-16.97" y1="9.80" x2="-19.92" y2="11.50" stroke="#a6a6a6" stroke-width="0.9"/><line x1="-19.60" y1="-0.00" x2="-23.00" y2="-0.00" stroke="#a6a6a6" stroke-width="0.9"/><line x1="-16.97" y1="-9.80" x2="-19.92" y2="-11.50" stroke="#a6a6a6" stroke-width="0.9"/><line x1="-9.80" y1="-16.97" x2="-11.50" y2="-19.92" stroke="#a6a6a6" stroke-width="0.9"/><line x1="0.00" y1="-19.60" x2="0.00" y2="-23.00" stroke="#a6a6a6" stroke-width="0.9"/><line x1="9.80" y1="-16.97" x2="11.50" y2="-19.92" stroke="#a6a6a6" stroke-width="0.9"/><line x1="16.97" y1="-9.80" x2="19.92" y2="-11.50" stroke="#a6a6a6" stroke-width="0.9"/><line x1="19.60" y1="-0.00" x2="23.00" y2="-0.00" stroke="#a6a6a6" stroke-width="0.9"/><line x1="16.97" y1="9.80" x2="19.92" y2="11.50" stroke="#a6a6a6" stroke-width="0.9"/><line x1="9.80" y1="16.97" x2="11.50" y2="19.92" stroke="#a6a6a6" stroke-width="0.9"/><circle cx="0" cy="0" r="18.2" fill="#bcbcbc"/><circle cx="1.2" cy="1.6" r="12.6" fill="#b1b1b1"/><path d="M-3.74 10.03L8.40 14.55L10.55 1.78Z" fill="#d0d1d2" stroke="#9c9c9c" stroke-width="0.7" stroke-linejoin="round"/><circle cx="0" cy="0" r="10.7" fill="#d5d6d8" stroke="#a9a9a9" stroke-width="0.6"/><path d="M3.40 10.46L8.25 14.03L7.36 8.17Z" fill="#e2383c"/></g></svg>
<div style="left:251px;top:262px;width:57px;height:15px;border:1px solid #a8a8a8;background:#fff;"></div>
<div class="t" style="left:280.30px;top:265px;font-size:10.3px;line-height:10.3px;transform:scaleX(0.8521);transform-origin:0 0;color:#111;text-rendering:geometricPrecision;">20 Hz</div>
<div style="left:334px;top:262px;width:56px;height:15px;border:1px solid #a8a8a8;background:#fff;"></div>
<div class="t" style="left:348.60px;top:265px;font-size:10.3px;line-height:10.3px;transform:scaleX(0.8521);transform-origin:0 0;color:#111;text-rendering:geometricPrecision;">18000 Hz</div>
<div class="t" style="left:258.00px;top:286px;font-size:10.3px;line-height:10.3px;transform:scaleX(0.8753);transform-origin:0 0;color:#111;text-rendering:geometricPrecision;">Low Cutoff</div>
<div class="t" style="left:339.60px;top:286px;font-size:10.3px;line-height:10.3px;transform:scaleX(0.8701);transform-origin:0 0;color:#111;text-rendering:geometricPrecision;">High Cutoff</div>
<div style="left:241px;top:307px;width:76px;height:22px;border:1px solid #9a9a9a;border-radius:3px;background:#f3f3f3;"></div>
<div class="t" style="left:245.40px;top:315px;font-size:10.3px;line-height:10.3px;transform:scaleX(0.8696);transform-origin:0 0;color:#111;text-rendering:geometricPrecision;">12</div>
<svg style="left:305px;top:315.5px" width="7" height="5" viewBox="0 0 7 5"><path d="M0 0H7L3.5 5Z" fill="#555"/></svg>
<div style="left:324px;top:307px;width:75px;height:22px;border:1px solid #9a9a9a;border-radius:3px;background:#f3f3f3;"></div>
<div class="t" style="left:327.90px;top:315px;font-size:10.3px;line-height:10.3px;transform:scaleX(0.9043);transform-origin:0 0;color:#111;text-rendering:geometricPrecision;">30</div>
<svg style="left:388px;top:315.5px" width="7" height="5" viewBox="0 0 7 5"><path d="M0 0H7L3.5 5Z" fill="#555"/></svg>
<div class="t" style="left:258.60px;top:339px;font-size:10.3px;line-height:10.3px;transform:scaleX(0.8603);transform-origin:0 0;color:#111;text-rendering:geometricPrecision;">Low Slope</div>
<div class="t" style="left:339.60px;top:339px;font-size:10.3px;line-height:10.3px;transform:scaleX(0.8794);transform-origin:0 0;color:#111;text-rendering:geometricPrecision;">High Slope</div>
<div style="left:578px;top:208px;width:11px;height:11px;border:1px solid #7a7a7a;background:#fff;"></div>
<div class="t" style="left:591.70px;top:209px;font-size:10.3px;line-height:10.3px;transform:scaleX(0.8437);transform-origin:0 0;color:#111;text-rendering:geometricPrecision;">Mute</div>
<div class="t" style="left:601.70px;top:233px;font-size:10.3px;line-height:10.3px;transform:scaleX(0.8436);transform-origin:0 0;color:#111;text-rendering:geometricPrecision;">Volume</div>
<div class="t" style="left:682.70px;top:233px;font-size:10.3px;line-height:10.3px;transform:scaleX(0.8591);transform-origin:0 0;color:#111;text-rendering:geometricPrecision;">Balance</div>
<div style="left:611px;top:256px;width:2px;height:151px;background:#8c8c8c;"></div>
<div style="left:618px;top:255px;width:7px;height:1px;background:#222;"></div>
<div style="left:618px;top:292px;width:7px;height:1px;background:#444;"></div>
<div style="left:618px;top:331px;width:7px;height:1px;background:#555;"></div>
<div style="left:618px;top:368px;width:7px;height:1px;background:#222;"></div>
<div style="left:618px;top:406px;width:7px;height:1px;background:#555;"></div>
<svg style="left:607px;top:291px" width="11" height="9" viewBox="0 0 11 9"><path d="M0.5 0.5H6.5L10.2 4.5L6.5 8.5H0.5Z" fill="#f4f4f4" stroke="#8a8a8a" stroke-width="1"/></svg>
<div style="left:588px;top:415px;width:57px;height:16px;border:1px solid #a8a8a8;background:#fff;"></div>
<div class="t" style="left:622.30px;top:419px;font-size:10.3px;line-height:10.3px;transform:scaleX(0.8424);transform-origin:0 0;color:#111;text-rendering:geometricPrecision;">0 dB</div>
<svg style="left:674px;top:249px" width="50" height="50" viewBox="0 0 50 50"><g transform="translate(25,25.30000000000001)"><line x1="-9.80" y1="16.97" x2="-11.50" y2="19.92" stroke="#a6a6a6" stroke-width="0.9"/><line x1="-16.97" y1="9.80" x2="-19.92" y2="11.50" stroke="#a6a6a6" stroke-width="0.9"/><line x1="-19.60" y1="-0.00" x2="-23.00" y2="-0.00" stroke="#a6a6a6" stroke-width="0.9"/><line x1="-16.97" y1="-9.80" x2="-19.92" y2="-11.50" stroke="#a6a6a6" stroke-width="0.9"/><line x1="-9.80" y1="-16.97" x2="-11.50" y2="-19.92" stroke="#a6a6a6" stroke-width="0.9"/><line x1="0.00" y1="-19.60" x2="0.00" y2="-23.00" stroke="#a6a6a6" stroke-width="0.9"/><line x1="9.80" y1="-16.97" x2="11.50" y2="-19.92" stroke="#a6a6a6" stroke-width="0.9"/><line x1="16.97" y1="-9.80" x2="19.92" y2="-11.50" stroke="#a6a6a6" stroke-width="0.9"/><line x1="19.60" y1="-0.00" x2="23.00" y2="-0.00" stroke="#a6a6a6" stroke-width="0.9"/><line x1="16.97" y1="9.80" x2="19.92" y2="11.50" stroke="#a6a6a6" stroke-width="0.9"/><line x1="9.80" y1="16.97" x2="11.50" y2="19.92" stroke="#a6a6a6" stroke-width="0.9"/><circle cx="0" cy="0" r="18.2" fill="#bcbcbc"/><circle cx="1.2" cy="1.6" r="12.6" fill="#b1b1b1"/><path d="M8.25 -6.81L0.00 -16.80L-8.25 -6.81Z" fill="#d0d1d2" stroke="#9c9c9c" stroke-width="0.7" stroke-linejoin="round"/><circle cx="0" cy="0" r="10.7" fill="#d5d6d8" stroke="#a9a9a9" stroke-width="0.6"/><path d="M2.29 -10.76L0.00 -16.20L-2.29 -10.76Z" fill="#e2383c"/></g></svg>
<div style="left:671px;top:310px;width:56px;height:16px;border:1px solid #a8a8a8;background:#fff;"></div>
<div class="t" style="left:718.50px;top:314px;font-size:10.3px;line-height:10.3px;transform:scaleX(0.7826);transform-origin:0 0;color:#111;text-rendering:geometricPrecision;">0</div>
<div class="t" style="left:668.80px;top:338px;font-size:10.3px;line-height:10.3px;transform:scaleX(0.8557);transform-origin:0 0;color:#111;text-rendering:geometricPrecision;">Transition Time</div>
<svg style="left:674px;top:354px" width="50" height="50" viewBox="0 0 50 50"><g transform="translate(25,25.399999999999977)"><line x1="-9.80" y1="16.97" x2="-11.50" y2="19.92" stroke="#a6a6a6" stroke-width="0.9"/><line x1="-16.97" y1="9.80" x2="-19.92" y2="11.50" stroke="#a6a6a6" stroke-width="0.9"/><line x1="-19.60" y1="-0.00" x2="-23.00" y2="-0.00" stroke="#a6a6a6" stroke-width="0.9"/><line x1="-16.97" y1="-9.80" x2="-19.92" y2="-11.50" stroke="#a6a6a6" stroke-width="0.9"/><line x1="-9.80" y1="-16.97" x2="-11.50" y2="-19.92" stroke="#a6a6a6" stroke-width="0.9"/><line x1="0.00" y1="-19.60" x2="0.00" y2="-23.00" stroke="#a6a6a6" stroke-width="0.9"/><line x1="9.80" y1="-16.97" x2="11.50" y2="-19.92" stroke="#a6a6a6" stroke-width="0.9"/><line x1="16.97" y1="-9.80" x2="19.92" y2="-11.50" stroke="#a6a6a6" stroke-width="0.9"/><line x1="19.60" y1="-0.00" x2="23.00" y2="-0.00" stroke="#a6a6a6" stroke-width="0.9"/><line x1="16.97" y1="9.80" x2="19.92" y2="11.50" stroke="#a6a6a6" stroke-width="0.9"/><line x1="9.80" y1="16.97" x2="11.50" y2="19.92" stroke="#a6a6a6" stroke-width="0.9"/><circle cx="0" cy="0" r="18.2" fill="#bcbcbc"/><circle cx="1.2" cy="1.6" r="12.6" fill="#b1b1b1"/><path d="M-5.92 -8.92L-16.71 -1.76L-7.64 7.49Z" fill="#d0d1d2" stroke="#9c9c9c" stroke-width="0.7" stroke-linejoin="round"/><circle cx="0" cy="0" r="10.7" fill="#d5d6d8" stroke="#a9a9a9" stroke-width="0.6"/><path d="M-10.46 -3.40L-16.41 -1.69L-10.94 1.15Z" fill="#e2383c"/></g></svg>
<div style="left:671px;top:415px;width:56px;height:16px;border:1px solid #a8a8a8;background:#fff;"></div>
<div class="t" style="left:699.20px;top:419px;font-size:10.3px;line-height:10.3px;transform:scaleX(0.8500);transform-origin:0 0;color:#111;text-rendering:geometricPrecision;">10 ms</div>
<div style="left:1px;top:605px;width:900px;height:1px;background:#fff;"></div>
<div style="left:900px;top:131px;width:1px;height:474px;background:#fff;"></div>
<div style="left:1px;top:606px;width:225px;height:1px;background:#cfcfcf;"></div>
<div style="left:226px;top:606px;width:675px;height:1px;background:#8a8a8a;"></div>
<div style="left:1px;top:607px;width:900px;height:15px;background:#e6e6e6;"></div>
<div style="left:1px;top:622px;width:900px;height:1px;background:#fff;"></div>
<svg style="left:5px;top:611px" width="9" height="8" viewBox="0 0 9 8"><rect x="0" y="0" width="2" height="8" fill="#999"/><path d="M9 0V8L3 4Z" fill="#999"/></svg>
<div style="left:226px;top:606px;width:1px;height:17px;background:#8a8a8a;"></div>
<div class="t" style="left:232.10px;top:611px;font-size:9px;line-height:9px;transform:scaleX(0.9885);transform-origin:0 0;color:#222;">Ready</div>
<div class="t" style="left:841.40px;top:611px;font-size:9px;line-height:9px;transform:scaleX(0.9888);transform-origin:0 0;color:#222;">T = 00:00.000</div>
<div style="left:0px;top:0px;width:902px;height:1px;background:#6e6e6e;"></div>
<div style="left:0px;top:0px;width:1px;height:624px;background:#6e6e6e;"></div>
<div style="left:901px;top:0px;width:1px;height:624px;background:#6e6e6e;"></div>
<div style="left:0px;top:623px;width:902px;height:1px;background:#333;"></div>
</body></html>
